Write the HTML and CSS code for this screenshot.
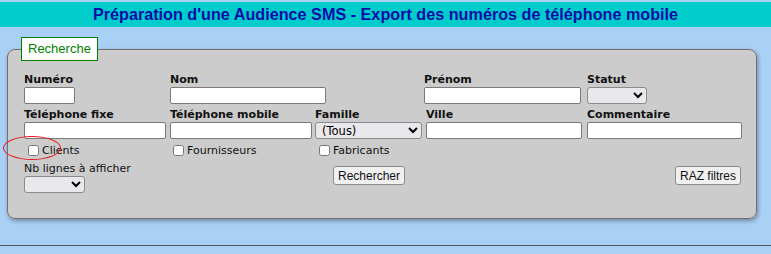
FILE: index.html
```html
<!DOCTYPE html>
<html lang="fr">
<head>
  <meta charset="UTF-8" />
  <title>Audience SMS</title>
  <link rel="stylesheet" href="styles.css">
</head>
<body>

  <!-- Titre -->
  <div class="page-title">Préparation d'une Audience SMS - Export des numéros de téléphone mobile</div>

  <!-- Filtres de recherche -->
  <fieldset class="search-box">
    <legend>Recherche</legend>
    <div class="filters">
      <div class="cell">
        <label class="lbl">Numéro</label>
        <input type="text" class="w-num">
      </div>
      <div class="cell span2">
        <label class="lbl">Nom</label>
        <input type="text" class="w-nom">
      </div>
      <div class="cell">
        <label class="lbl">Prénom</label>
        <input type="text" class="w-prenom">
      </div>
      <div class="cell">
        <label class="lbl">Statut</label>
        <select class="w-statut"><option></option></select>
      </div>

      <div class="cell">
        <label class="lbl">Téléphone fixe</label>
        <input type="text" class="w-tel">
      </div>
      <div class="cell">
        <label class="lbl">Téléphone mobile</label>
        <input type="text" class="w-tel">
      </div>
      <div class="cell">
        <label class="lbl">Famille</label>
        <select class="w-famille"><option>(Tous)</option></select>
      </div>
      <div class="cell shift">
        <label class="lbl">Ville</label>
        <input type="text" class="w-ville">
      </div>
      <div class="cell">
        <label class="lbl">Commentaire</label>
        <input type="text" class="w-comment">
      </div>

      <label class="check c1"><input type="checkbox"> Clients</label>
      <label class="check c2"><input type="checkbox"> Fournisseurs</label>
      <label class="check c3"><input type="checkbox"> Fabricants</label>

      <div class="cell nb">
        <label class="plain">Nb lignes à afficher</label>
        <select class="w-nb"><option></option></select>
      </div>
      <div class="cell btn-search">
        <button type="button">Rechercher</button>
      </div>
      <div class="cell btn-reset">
        <button type="button">RAZ filtres</button>
      </div>
    </div>
  </fieldset>

  <div class="results"></div>

  <!-- annotation -->
  <div class="circle-mark"></div>
</body>
</html>
```

FILE: styles.css
```css
body {
  margin: 0;
  padding-top: 2px;
  background-color: #a9d0f5;
  font-family: "DejaVu Sans", Verdana, sans-serif;
  font-size: 11px;
  color: #111;
  position: relative;
}

.page-title {
  background-color: #00cccc;
  color: #0c0ca6;
  font-family: "Liberation Sans", Arial, sans-serif;
  font-weight: bold;
  font-size: 16.2px;
  height: 25px;
  line-height: 25px;
  text-align: center;
}

.search-box {
  margin: 10px 0 0 7px;
  width: 750px;
  box-sizing: border-box;
  height: 182px;
  background-color: #cccccc;
  border: 1px solid #6f6f6f;
  border-radius: 8px;
  box-shadow: 1px 2px 4px rgba(0, 0, 0, 0.35);
  padding: 12px 15px 0 16px;
}

.search-box legend {
  background: #fff;
  border: 1px solid #008000;
  color: #008000;
  font-family: "Liberation Sans", Arial, sans-serif;
  font-size: 13px;
  padding: 3px 6px 4px 6px;
  margin-left: -3px;
  line-height: 15px;
}

.filters {
  display: grid;
  grid-template-columns: 146px 145px 109px 163px 154px;
  grid-auto-rows: auto;
}

.cell {
  display: flex;
  flex-direction: column;
  align-items: flex-start;
  height: 35px;
}

.span2 {
  grid-column: span 2;
}

.shift {
  padding-left: 2px;
}

.lbl {
  font-weight: bold;
  height: 14px;
  line-height: 14px;
}

input[type="text"] {
  box-sizing: border-box;
  height: 17px;
  border: 1px solid #7a7a7a;
  border-radius: 2px;
  background: #fff;
  padding: 0 2px;
  margin: 0;
}

select {
  box-sizing: border-box;
  height: 17px;
  border: 1px solid #8a8a8a;
  border-radius: 3px;
  background: #e9e9ed;
  font-family: "DejaVu Sans", Verdana, sans-serif;
  font-size: 11.5px;
  padding: 0 0 0 2px;
  margin: 0;
}

.w-num { width: 51px; }
.w-nom { width: 156px; }
.w-prenom { width: 157px; }
.w-statut { width: 60px; }
.w-tel { width: 142px; }
.w-famille { width: 107px; }
.w-ville { width: 156px; }
.w-comment { width: 155px; }
.w-nb { width: 61px; }

.check {
  display: flex;
  align-items: center;
  height: 18px;
  margin: -2px 0 3px 0;
}

.check input {
  width: 11px;
  height: 11px;
  margin: 0 3px 0 4px;
}

.c2 input { margin-left: 3px; }

.c3 {
  grid-column: 3 / span 3;
}

.nb {
  grid-column: 1;
  height: 36px;
}

.plain {
  height: 14px;
  line-height: 14px;
}

.btn-search {
  grid-column: 3;
  padding: 4px 0 0 18px;
}

.btn-reset {
  grid-column: 5;
  align-items: flex-end;
  padding-top: 4px;
}

button {
  font-family: "Liberation Sans", Arial, sans-serif;
  font-size: 12px;
  height: 19px;
  padding: 0 4px;
  background: #f0f0f0;
  border: 1px solid #8c8c8c;
  border-radius: 3px;
  color: #111;
}

.results {
  margin-top: 26px;
  border-top: 1px solid #555;
}

.circle-mark {
  position: absolute;
  left: 3px;
  top: 136px;
  width: 56px;
  height: 22px;
  border: 1.5px solid #e8161c;
  border-radius: 50%;
}
```
